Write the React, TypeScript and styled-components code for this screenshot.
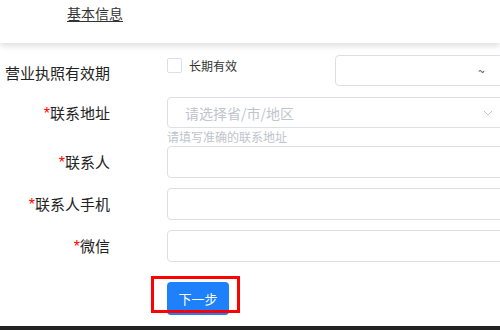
import React from "react";
import styled, { createGlobalStyle } from "styled-components";

const Global = createGlobalStyle`
  html, body { margin: 0; padding: 0; background: #fff; }
  body { width: 500px; height: 330px; overflow: hidden; font-family: "Noto Sans CJK SC", "Noto Sans", sans-serif; }
  #root { width: 500px; overflow: hidden; }
`;

const Page = styled.div`
  width: 500px;
  height: 330px;
  overflow: hidden;
  display: flex;
  flex-direction: column;
`;

const Header = styled.div`
  height: 43px;
  flex: none;
  background: #fff;
  box-shadow: 0 3px 6px rgba(0, 0, 0, 0.13);
  position: relative;
  z-index: 1;
  padding-left: 67px;
  box-sizing: border-box;
`;

const HeaderTab = styled.span`
  display: inline-block;
  font-size: 14px;
  line-height: 20px;
  margin-top: 1px;
  color: #333;
  text-decoration: underline;
  text-underline-offset: 2px;
`;

const Form = styled.div`
  padding-top: 12px;
  display: flex;
  flex-direction: column;
  flex: none;
`;

const Row = styled.div<{ $h: number; $mt: number }>`
  display: flex;
  align-items: center;
  height: ${(p) => p.$h}px;
  margin-top: ${(p) => p.$mt}px;
  white-space: nowrap;
`;

const Label = styled.div<{ $dy?: number }>`
  width: 110px;
  margin-right: 57px;
  flex: none;
  text-align: right;
  font-size: 15px;
  color: #222;
  line-height: 20px;
  position: relative;
  top: ${(p) => p.$dy ?? 0}px;
`;

const Star = styled.span`
  color: #f00;
  font-size: 16px;
  font-family: "Liberation Sans", sans-serif;
  margin-right: 0;
`;

const CheckGroup = styled.label`
  width: 168px;
  flex: none;
  align-self: flex-start;
  display: flex;
  align-items: center;
  gap: 7px;
  padding-top: 2px;
  font-size: 12px;
  color: #333;
`;

const CheckBox = styled.span`
  width: 15px;
  height: 15px;
  box-sizing: border-box;
  border: 1px solid #dcdfe6;
  border-radius: 2px;
  background: #fff;
  flex: none;
`;

const Field = styled.div<{ $w: number }>`
  width: ${(p) => p.$w}px;
  height: 100%;
  flex: none;
  box-sizing: border-box;
  border: 1px solid #dcdfe6;
  border-radius: 4px;
  background: #fff;
  display: flex;
  align-items: center;
  padding: 0 15px;
  font-size: 14px;
  color: #c0c4cc;
`;

const Tilde = styled.span`
  margin-left: 127px;
  font-size: 12px;
  color: #333;
`;

const Placeholder = styled.span`
  flex: 1;
  margin-left: 2px;
`;

const Chevron = styled.svg`
  margin-right: -2px;
`;

const Hint = styled.div`
  margin-left: 167px;
  font-size: 12px;
  line-height: 18px;
  color: #c0c4cc;
`;

const Actions = styled.div`
  margin-top: 20px;
  padding-left: 167px;
`;

const ButtonWrap = styled.div`
  position: relative;
  width: 62px;
`;

const PrimaryButton = styled.button`
  width: 62px;
  height: 33px;
  border: none;
  border-radius: 4px;
  background: #1f80fb;
  color: #fff;
  font-family: inherit;
  font-size: 13px;
  padding: 0;
  display: block;
`;

const Highlight = styled.div`
  position: absolute;
  left: -16px;
  top: -6px;
  width: 89px;
  height: 37px;
  box-sizing: border-box;
  border: 3px solid #f00;
  pointer-events: none;
`;

const Footer = styled.div`
  margin-top: 11px;
  height: 20px;
  background: #222;
  flex: none;
`;

export default function App() {
  return (
    <Page>
      <Global />
      <Header>
        <HeaderTab>基本信息</HeaderTab>
      </Header>
      <Form>
        <Row $h={31} $mt={0}>
          <Label $dy={2}>营业执照有效期</Label>
          <CheckGroup>
            <CheckBox />
            长期有效
          </CheckGroup>
          <Field $w={290}>
            <Tilde>~</Tilde>
          </Field>
        </Row>
        <Row $h={31} $mt={11}>
          <Label $dy={1}>
            <Star>*</Star>联系地址
          </Label>
          <Field $w={340}>
            <Placeholder>请选择省/市/地区</Placeholder>
            <Chevron width="10" height="6" viewBox="0 0 10 6" fill="none">
              <path d="M1 1l4 4 4-4" stroke="#c0c4cc" strokeWidth="1" />
            </Chevron>
          </Field>
        </Row>
        <Hint>请填写准确的联系地址</Hint>
        <Row $h={32} $mt={0}>
          <Label>
            <Star>*</Star>联系人
          </Label>
          <Field $w={400} />
        </Row>
        <Row $h={32} $mt={10}>
          <Label>
            <Star>*</Star>联系人手机
          </Label>
          <Field $w={400} />
        </Row>
        <Row $h={32} $mt={10}>
          <Label>
            <Star>*</Star>微信
          </Label>
          <Field $w={400} />
        </Row>
        <Actions>
          <ButtonWrap>
            <PrimaryButton>下一步</PrimaryButton>
            <Highlight />
          </ButtonWrap>
        </Actions>
      </Form>
      <Footer />
    </Page>
  );
}
